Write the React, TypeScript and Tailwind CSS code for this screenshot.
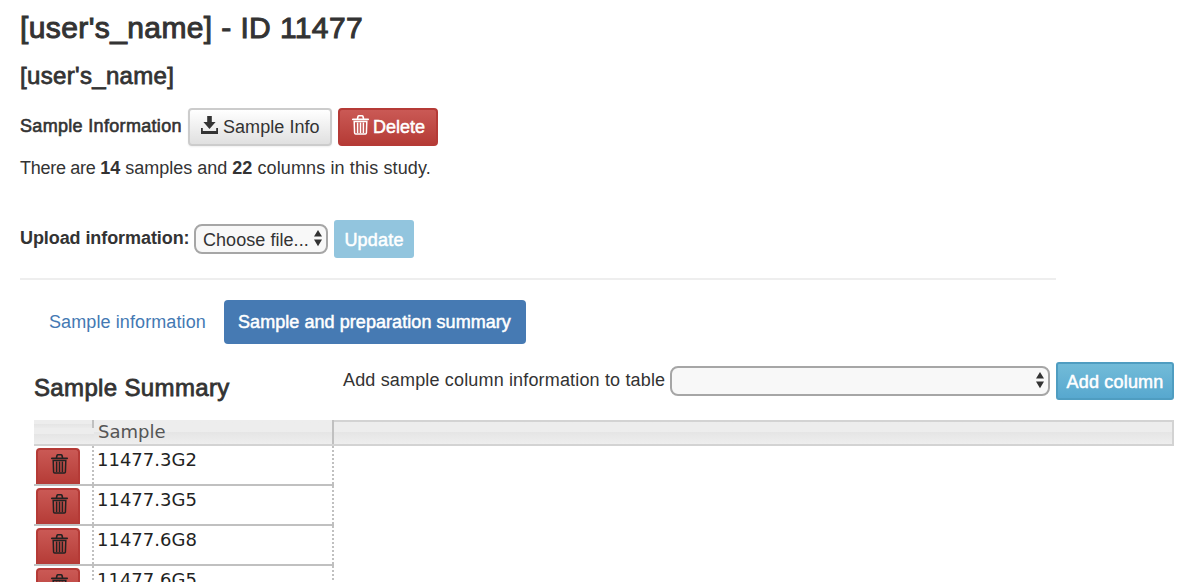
import React from "react";

function Trash({ className = "" }: { className?: string }) {
  return (
    <svg width="18" height="20" viewBox="0 0 18 20" fill="none" stroke="currentColor" className={className}>
      <path d="M5.4 4L6 1.5Q6.2 .8 7 .8H10Q10.8 .8 11 1.5L11.6 4" strokeWidth="1.6" />
      <path d="M.8 4.3H16.2" strokeWidth="1.7" strokeLinecap="round" />
      <path d="M2.2 6.4L2.6 18Q2.7 19 3.7 19H13.3Q14.3 19 14.4 18L14.8 6.4Z" strokeWidth="1.5" />
      <path d="M5.6 7.5V18M8.5 7.5V18M11.4 7.5V18" strokeWidth="1.5" />
    </svg>
  );
}

function Arrows() {
  return (
    <svg width="10" height="18" viewBox="0 0 10 18" fill="#333" className="mb-0.5 shrink-0">
      <path d="M5 1L9 7.6H1ZM5 17.2L1 10.6H9Z" />
    </svg>
  );
}

const samples = ["11477.3G2", "11477.3G5", "11477.6G8", "11477.6G5"];

export default function App() {
  return (
    <main className="h-[582px] w-[1178px] overflow-hidden bg-white pl-5 font-['Liberation_Sans',sans-serif] text-[18px] leading-6 text-[#333]">
      <h1 className="h-[62px] pt-2.5 text-[30px] leading-9 tracking-[0.39px] [-webkit-text-stroke:1px_#333]"><span>[user's_name] - ID 11477</span></h1>
      <h2 className="h-[46px] text-[24px] leading-7 tracking-[0.33px] [-webkit-text-stroke:0.8px_#333]"><span>[user's_name]</span></h2>
      <div className="flex h-[38px]">
        <span className="mt-1.5 w-[168px] tracking-[0.32px] whitespace-nowrap [-webkit-text-stroke:0.6px_#333]">Sample Information</span>
        <button className="flex h-[38px] w-[144px] shrink-0 items-center rounded-[4px] border-2 border-[#ccc] bg-linear-to-b from-white to-[#e0e0e0] pl-[11px] shadow-[0_1px_2px_#0001]">
          <svg width="17" height="18" viewBox="0 0 17 18" fill="#333" className="mb-1 shrink-0">
            <path d="M6.2 0H10.8V6H14.6L8.5 13L2.4 6H6.2ZM0 12H1.8V15H15.2V12H17V18H0Z" />
          </svg>
          <span className="ml-[5px] tracking-[0.05px] whitespace-nowrap">Sample Info</span>
        </button>
        <button className="ml-1.5 flex h-[38px] w-[100px] items-center rounded-[4px] border-2 border-[#b53a36] bg-linear-to-b from-[#ca5955] to-[#b53b36] pl-3 text-white">
          <Trash className="mb-1 shrink-0" />
          <span className="ml-[3px] [-webkit-text-stroke:0.5px_white]">Delete</span>
        </button>
      </div>
      <p className="h-[74px] pt-2.5 whitespace-nowrap">
        <span className="tracking-[-0.28px]">There are </span><b>14</b> samples and <b>22</b><span className="tracking-[0.12px]"> columns in this study.</span>
      </p>
      <div className="flex h-[38px]">
        <b className="mt-1.5 w-[174px] shrink-0 tracking-[-0.08px] whitespace-nowrap">Upload information:</b>
        <div className="mt-1 flex h-[30px] w-[134px] items-center rounded-[8px] border-2 border-[#a6a6a6] bg-[#f8f8f8] pl-[7px]">
          <span className="w-[110px] pt-0.5 tracking-[0.05px] whitespace-nowrap">Choose file...</span>
          <Arrows />
        </div>
        <button className="ml-1.5 h-[38px] w-20 rounded-[3px] bg-[#92c5de] pt-0.5 tracking-[0.2px] text-white [-webkit-text-stroke:0.5px_white]"><span>Update</span></button>
      </div>
      <hr className="mt-5 h-0.5 w-[1036px] border-0 bg-[#eee]" />
      <nav className="mt-5 flex h-11 items-center text-[#4479b3]">
        <span className="ml-[29px] w-[175px] tracking-[0.1px] whitespace-nowrap"><span>Sample information</span></span>
        <span className="h-11 w-[302px] rounded-[4px] bg-[#467ab3] pl-3.5 leading-11 tracking-[0.06px] whitespace-nowrap text-white [-webkit-text-stroke:0.5px_white]"><span>Sample and preparation summary</span></span>
      </nav>
      <div className="flex h-[76px] pt-[18px] pl-3.5">
        <h3 className="mt-3 w-[309px] shrink-0 text-[24px] leading-7 tracking-[0.35px] [-webkit-text-stroke:0.8px_#333]"><span>Sample Summary</span></h3>
        <span className="mt-1.5 w-[327px] shrink-0 tracking-[0.16px] whitespace-nowrap"><span>Add sample column information to table</span></span>
        <div className="mt-1 flex h-[30px] w-[380px] shrink-0 items-center justify-end rounded-[8px] border-2 border-[#a6a6a6] bg-[#f8f8f8] pr-[3px]">
          <Arrows />
        </div>
        <button className="ml-1.5 h-[38px] w-[118px] shrink-0 rounded-[3px] border-2 border-[#4f9dc1] bg-linear-to-b from-[#72bbd8] to-[#57a8cf] pt-0.5 tracking-[0.2px] whitespace-nowrap text-white [-webkit-text-stroke:0.5px_white]"><span>Add column</span></button>
      </div>
      <section className="ml-3.5 w-[1140px] font-['DejaVu_Sans',sans-serif]">
        <div className="flex h-[26px] border-b-2 border-[#d3d3d3] bg-linear-to-b from-[#ededed] from-50% via-[#e5e5e5] via-50% to-[#eee]">
          <div className="flex h-6 w-[60px] justify-end bg-[linear-gradient(to_bottom,#ededed_0px,#ededed_4px,#e5e5e5_4px,#ebebeb_8px,#ededed_8px,#ededed_14px,#e5e5e5_14px,#eee_24px)]">
            <i className="h-2 w-0.5 bg-[#c0c0c0]" />
          </div>
          <div className="w-60 border-r-2 border-[#c0c0c0] pl-1 text-[18px] leading-6 text-[#555]">Sample</div>
          <div className="grow border-t-2 border-r-2 border-[#d3d3d3]" />
        </div>
        {samples.map((s) => (
          <div key={s} className="flex h-10 w-[300px] border-b-2 border-[#c0c0c0] text-[#222]">
            <div className="flex w-[60px] border-r-2 border-dotted border-r-[#c0c0c0] pt-0.5 pl-0.5">
              <button className="flex h-9 w-11 justify-center rounded-t-[4px] border-2 border-b-0 border-[#b53a36] bg-linear-to-b from-[#ca5955] to-[#b53b36] pt-1 pl-[3px]">
                <Trash />
              </button>
            </div>
            <div className="w-60 border-r-2 border-dotted border-r-[#c0c0c0] pl-[3px] leading-7">{s}</div>
          </div>
        ))}
      </section>
    </main>
  );
}
